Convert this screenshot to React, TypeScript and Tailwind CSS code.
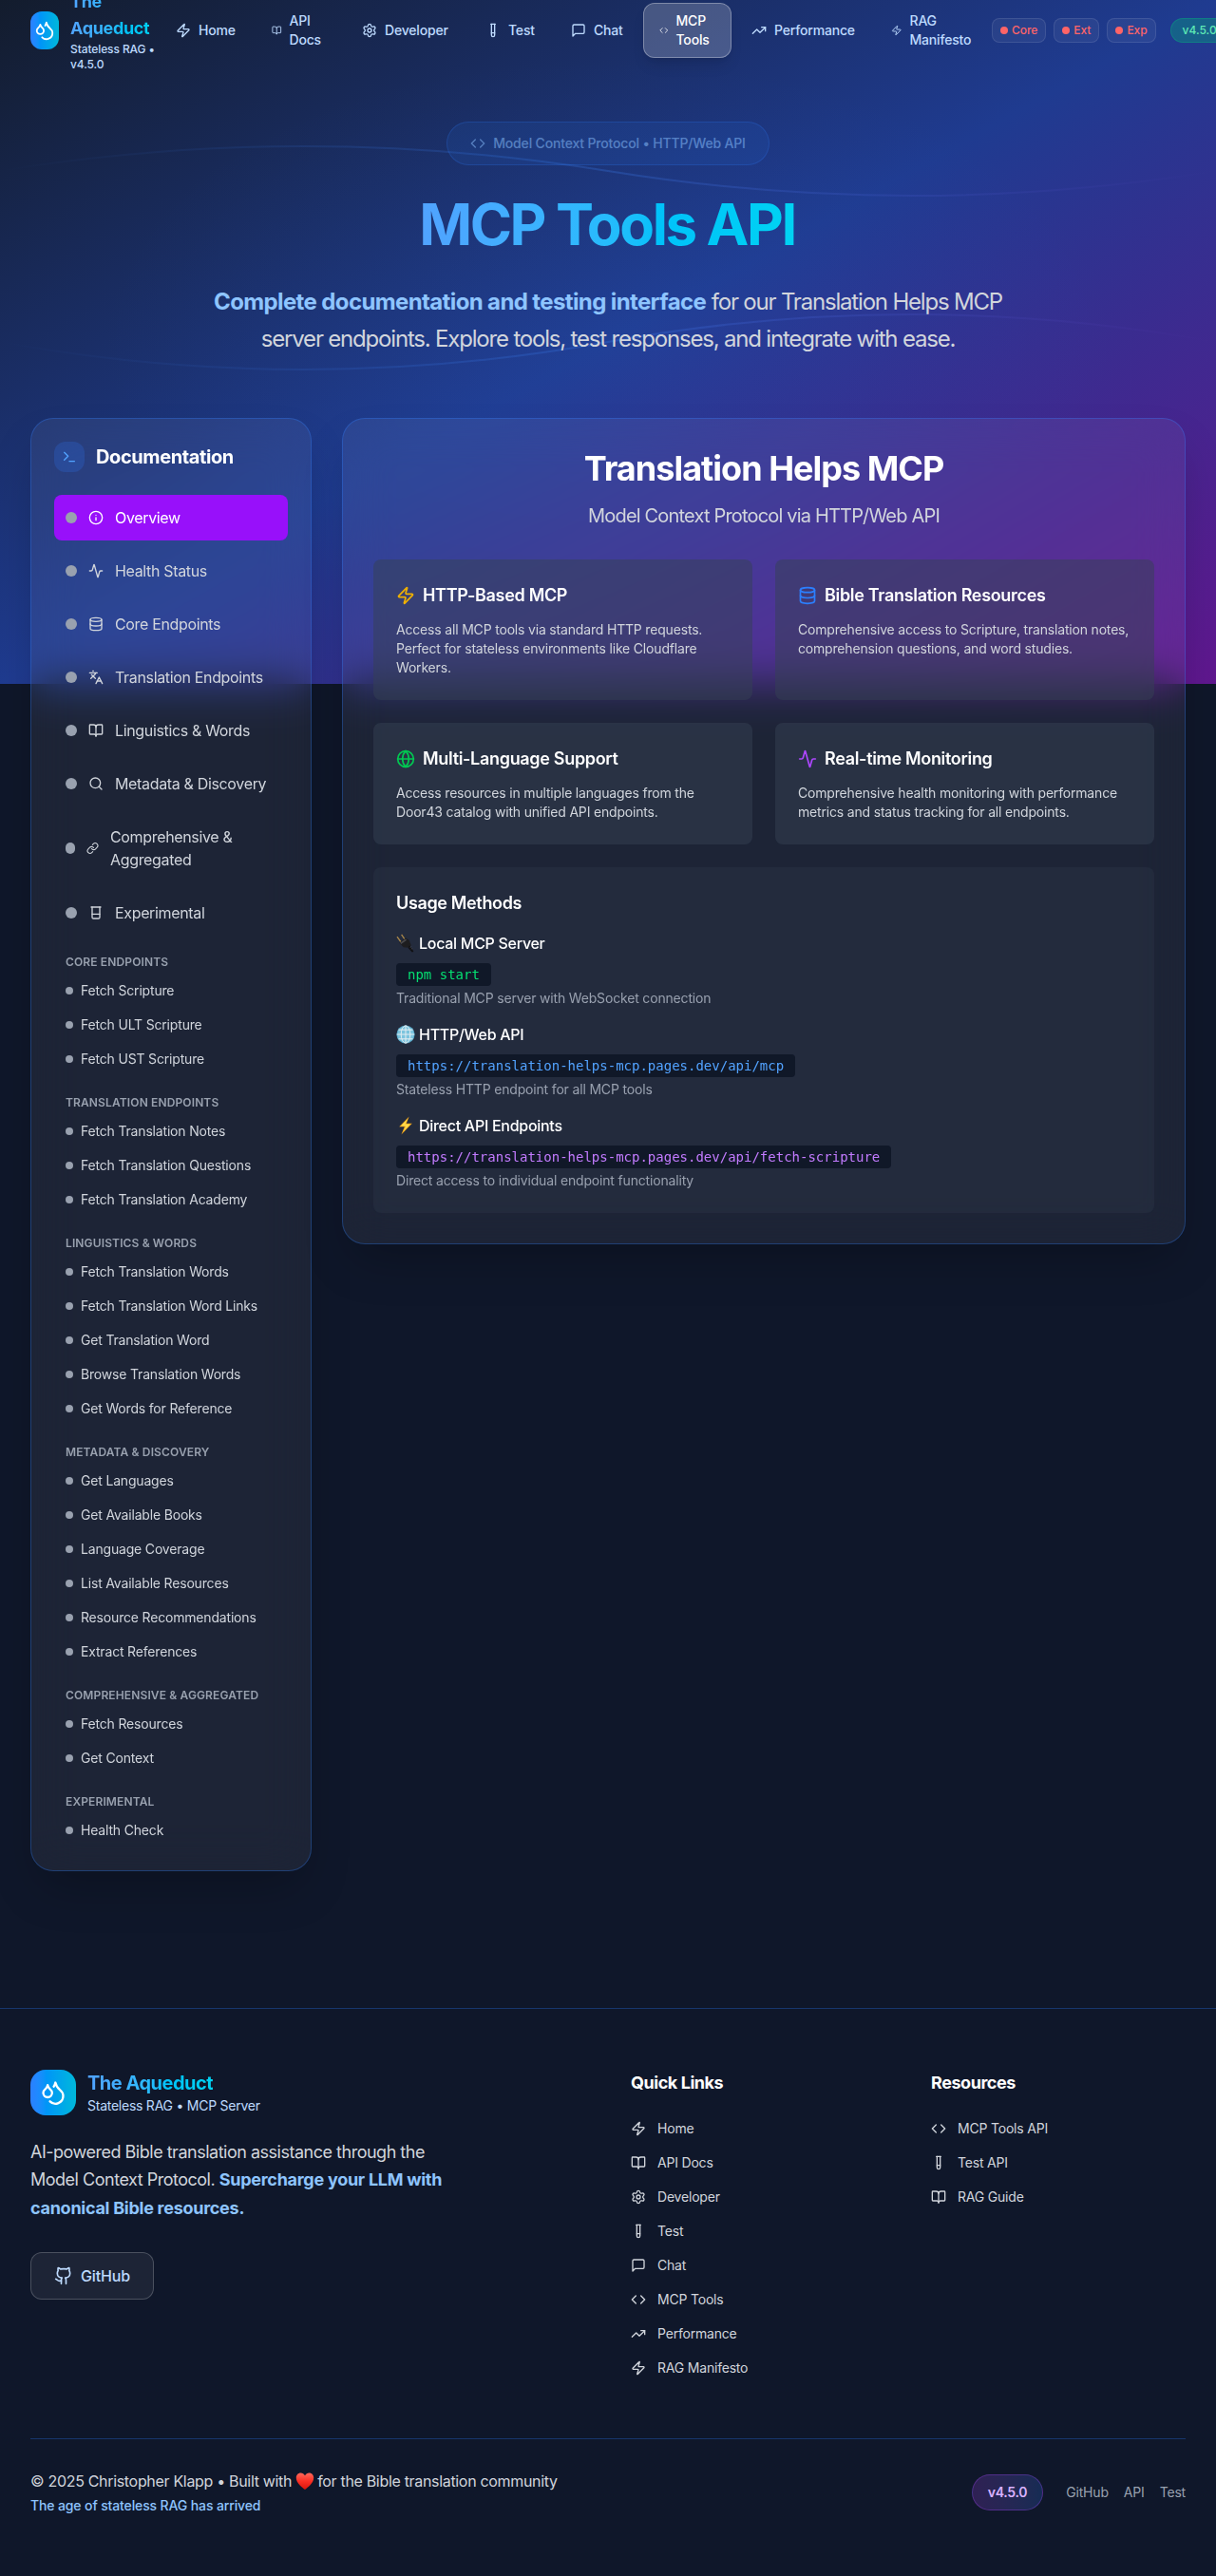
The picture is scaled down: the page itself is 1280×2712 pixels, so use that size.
import React from "react";
import {
  Activity,
  Beaker,
  BookOpen,
  Code,
  Database,
  Droplets,
  Github,
  Globe,
  Info,
  Languages,
  Link,
  Search,
  Settings,
  Terminal,
  TestTube,
  TrendingUp,
  Zap,
} from "lucide-react";

type IconType = React.ComponentType<{ className?: string }>;

function Message({ className }: { className?: string }) {
  return (
    <svg
      viewBox="0 0 24 24"
      fill="none"
      stroke="currentColor"
      strokeWidth="2"
      strokeLinecap="round"
      strokeLinejoin="round"
      className={className}
    >
      <path d="M21 15a2 2 0 0 1-2 2H7l-4 4V5a2 2 0 0 1 2-2h14a2 2 0 0 1 2 2z" />
    </svg>
  );
}

const navItems: { label: string; icon: IconType; box: string; iconSize: string; active?: boolean }[] = [
  { label: "Home", icon: Zap, box: "w-[97px]", iconSize: "size-4" },
  { label: "API Docs", icon: BookOpen, box: "w-[91px]", iconSize: "h-4 w-[10.5px]" },
  { label: "Developer", icon: Settings, box: "w-[126px]", iconSize: "size-4" },
  { label: "Test", icon: TestTube, box: "w-[86px]", iconSize: "size-4" },
  { label: "Chat", icon: Message, box: "w-[89px]", iconSize: "size-4" },
  { label: "MCP Tools", icon: Code, box: "w-[93px]", iconSize: "h-4 w-[9.5px]", active: true },
  { label: "Performance", icon: TrendingUp, box: "w-[143px]", iconSize: "size-4" },
  { label: "RAG Manifesto", icon: Zap, box: "w-[119px]", iconSize: "h-4 w-[11.5px]" },
];

const sections: { label: string; icon: IconType; active?: boolean; tall?: boolean }[] = [
  { label: "Overview", icon: Info, active: true },
  { label: "Health Status", icon: Activity },
  { label: "Core Endpoints", icon: Database },
  { label: "Translation Endpoints", icon: Languages },
  { label: "Linguistics & Words", icon: BookOpen },
  { label: "Metadata & Discovery", icon: Search },
  { label: "Comprehensive & Aggregated", icon: Link, tall: true },
  { label: "Experimental", icon: Beaker },
];

const groups = [
  { title: "Core Endpoints", items: ["Fetch Scripture", "Fetch ULT Scripture", "Fetch UST Scripture"] },
  {
    title: "Translation Endpoints",
    items: ["Fetch Translation Notes", "Fetch Translation Questions", "Fetch Translation Academy"],
  },
  {
    title: "Linguistics & Words",
    items: [
      "Fetch Translation Words",
      "Fetch Translation Word Links",
      "Get Translation Word",
      "Browse Translation Words",
      "Get Words for Reference",
    ],
  },
  {
    title: "Metadata & Discovery",
    items: [
      "Get Languages",
      "Get Available Books",
      "Language Coverage",
      "List Available Resources",
      "Resource Recommendations",
      "Extract References",
    ],
  },
  { title: "Comprehensive & Aggregated", items: ["Fetch Resources", "Get Context"] },
  { title: "Experimental", items: ["Health Check"] },
];

const features: { title: string; icon: IconType; color: string; text: string }[] = [
  {
    title: "HTTP-Based MCP",
    icon: Zap,
    color: "text-yellow-500",
    text: "Access all MCP tools via standard HTTP requests. Perfect for stateless environments like Cloudflare Workers.",
  },
  {
    title: "Bible Translation Resources",
    icon: Database,
    color: "text-blue-500",
    text: "Comprehensive access to Scripture, translation notes, comprehension questions, and word studies.",
  },
  {
    title: "Multi-Language Support",
    icon: Globe,
    color: "text-green-500",
    text: "Access resources in multiple languages from the Door43 catalog with unified API endpoints.",
  },
  {
    title: "Real-time Monitoring",
    icon: Activity,
    color: "text-purple-500",
    text: "Comprehensive health monitoring with performance metrics and status tracking for all endpoints.",
  },
];

function PlugEmoji() {
  return (
    <svg viewBox="0 0 20 20" className="size-5 shrink-0">
      <path d="M1 3.2 5.2 9M5.6.8 9.4 6.4" stroke="#a8874a" strokeWidth="1.3" />
      <path d="M3.2 9.6 10 4.6l3.6 2.2 2.2 5.4-2.6 2.6-5.4-.6z" fill="#1d1d1f" />
      <path d="M4.2 9.6 10 5.4l1 1.3-5.8 4.4z" fill="#4a4a4d" />
      <path d="m13.8 12.6 2 1.6 2.6 4.6-1.6.8-4-4.4z" fill="#111113" />
      <path d="m14.6 14.6 1.6-1M15.8 16.2l1.4-.8" stroke="#55555a" strokeWidth=".7" />
    </svg>
  );
}

function GlobeEmoji() {
  return (
    <svg viewBox="0 0 20 20" className="size-5 shrink-0">
      <circle cx="10" cy="10" r="9.6" fill="#58a9c9" />
      <circle cx="10" cy="10" r="8.6" fill="#7cc4de" />
      <g fill="none" stroke="#e4eef2" strokeWidth="1">
        <path d="M10 .8v18.4M.8 10h18.4M2.4 5.2h15.2M2.4 14.8h15.2" />
        <ellipse cx="10" cy="10" rx="4.8" ry="9.2" />
      </g>
    </svg>
  );
}

function BoltEmoji() {
  return (
    <svg viewBox="0 0 20 20" className="size-5 shrink-0">
      <path d="M13.6.6 3.2 11.2h5.6L5.4 19.6l11.4-11.8h-6z" fill="#f7a81b" />
      <path d="M12.4 2.6 5 10.4h5.2l-2.8 6.4 7.4-8.2H9.4z" fill="#ffdb4d" />
    </svg>
  );
}

function HeartEmoji() {
  return (
    <svg viewBox="0 0 20 20" className="mr-[3px] ml-1 inline-block size-5 align-[-4px]">
      <defs>
        <linearGradient id="heart" x1="0" y1="0" x2="0" y2="1">
          <stop offset="0" stopColor="#ff6a5c" />
          <stop offset=".5" stopColor="#fb2f24" />
          <stop offset="1" stopColor="#d9160c" />
        </linearGradient>
      </defs>
      <path
        d="M10 19C7.4 17.4.8 12.4.8 6.6.8 3.6 2.9 1.4 5.5 1.4c2 0 3.6 1.1 4.5 2.9.9-1.8 2.5-2.9 4.5-2.9 2.6 0 4.7 2.2 4.7 5.2C19.2 12.4 12.6 17.4 10 19z"
        fill="url(#heart)"
      />
    </svg>
  );
}

const methods = [
  {
    title: "Local MCP Server",
    emoji: PlugEmoji,
    code: "npm start",
    color: "text-green-400",
    note: "Traditional MCP server with WebSocket connection",
  },
  {
    title: "HTTP/Web API",
    emoji: GlobeEmoji,
    code: "https://translation-helps-mcp.pages.dev/api/mcp",
    color: "text-blue-400",
    note: "Stateless HTTP endpoint for all MCP tools",
  },
  {
    title: "Direct API Endpoints",
    emoji: BoltEmoji,
    code: "https://translation-helps-mcp.pages.dev/api/fetch-scripture",
    color: "text-purple-400",
    note: "Direct access to individual endpoint functionality",
  },
];

const quickLinks: { label: string; icon: IconType }[] = [
  { label: "Home", icon: Zap },
  { label: "API Docs", icon: BookOpen },
  { label: "Developer", icon: Settings },
  { label: "Test", icon: TestTube },
  { label: "Chat", icon: Message },
  { label: "MCP Tools", icon: Code },
  { label: "Performance", icon: TrendingUp },
  { label: "RAG Manifesto", icon: Zap },
];

const resources: { label: string; icon: IconType }[] = [
  { label: "MCP Tools API", icon: Code },
  { label: "Test API", icon: TestTube },
  { label: "RAG Guide", icon: BookOpen },
];

function Backdrop() {
  return (
    <div className="absolute inset-x-0 top-0 h-[720px] bg-linear-to-br/srgb from-[#131c2d] via-[#1f3b90] to-[#60178f]">
      <div className="absolute inset-0 bg-[radial-gradient(ellipse_at_center,rgb(59_130_246/0.07),transparent_60%)]" />
      <svg viewBox="0 0 1280 720" className="h-full w-full" fill="none">
        <defs>
          <linearGradient id="flow" x1="0" x2="1" y1="0" y2="0">
            <stop offset="0" stopColor="#3b82f6" stopOpacity="0" />
            <stop offset=".5" stopColor="#3b82f6" stopOpacity=".25" />
            <stop offset="1" stopColor="#8b5cf6" stopOpacity="0" />
          </linearGradient>
        </defs>
        <path d="M0 180Q320 128 640 180T1280 180" stroke="url(#flow)" strokeWidth="2" />
        <path d="M0 360Q320 418 640 360T1280 360" stroke="url(#flow)" strokeWidth="2" />
      </svg>
    </div>
  );
}

function Header() {
  return (
    <header className="flex h-16 items-center pl-8">
      <div className="flex w-[136px] shrink-0 items-center gap-3">
        <div className="flex h-10 w-[30px] shrink-0 items-center justify-center rounded-xl bg-linear-to-r from-blue-500 to-cyan-500">
          <Droplets className="h-6 w-[22px] text-white" />
        </div>
        <div className="w-[94px] shrink-0">
          <div className="w-[88px] bg-linear-to-r from-blue-400 to-cyan-400 bg-clip-text text-lg leading-7 font-bold tracking-[-0.35px] text-transparent">
            The
            <br />
            Aqueduct
          </div>
          <div className="text-xs font-medium tracking-[-0.1px] text-blue-200">
            Stateless RAG •<br />
            v4.5.0
          </div>
        </div>
      </div>
      <nav className="flex shrink-0 items-center gap-1">
        {navItems.map(({ label, icon: Icon, box, iconSize, active }) => (
          <a
            key={label}
            className={`flex shrink-0 items-center gap-2 rounded-xl border px-4 py-2 text-sm font-medium tracking-[-0.18px] ${box} ${
              active ? "border-white/30 bg-white/20 text-white shadow-lg" : "border-transparent text-blue-200"
            }`}
          >
            <Icon className={`shrink-0 ${iconSize}`} />
            <span>{label}</span>
          </a>
        ))}
      </nav>
      <div className="ml-1 flex shrink-0 items-center gap-2">
        {["Core", "Ext", "Exp"].map((name) => (
          <span
            key={name}
            className="flex items-center gap-1 rounded-lg border border-white/10 bg-white/5 px-2 py-1 text-xs font-medium tracking-[-0.05px] text-red-400"
          >
            <span className="size-2 rounded-full bg-red-400" />
            {name}
          </span>
        ))}
        <span className="ml-[7px] rounded-full border border-emerald-500/30 bg-emerald-500/30 px-3 py-1 text-xs font-medium text-emerald-300">
          v4.5.0
        </span>
      </div>
    </header>
  );
}

function Sidebar() {
  return (
    <aside className="w-[296px] shrink-0 rounded-3xl border border-blue-500/30 bg-white/[0.06] p-6 shadow-2xl backdrop-blur-xl">
      <div className="mb-6 flex items-center gap-3">
        <div className="flex size-8 items-center justify-center rounded-xl bg-blue-500/20">
          <Terminal className="size-4 text-blue-400" />
        </div>
        <h3 className="text-xl leading-8 font-bold tracking-[-0.4px] text-white">Documentation</h3>
      </div>
      <nav className="flex flex-col gap-2">
        {sections.map(({ label, icon: Icon, active, tall }) => (
          <a
            key={label}
            className={`flex items-center gap-3 rounded-lg p-3 text-base leading-6 tracking-[-0.34px] ${
              active ? "bg-purple-600 text-white" : "text-gray-300"
            }`}
          >
            <span className={`h-3 shrink-0 rounded-full bg-gray-400 ${tall ? "w-[10px]" : "w-3"}`} />
            <Icon className={`h-4 shrink-0 ${tall ? "w-[13px]" : "w-4"}`} />
            <span className={tall ? "w-[140px]" : "whitespace-nowrap"}>{label}</span>
          </a>
        ))}
      </nav>
      {groups.map((group) => (
        <div key={group.title} className="mt-5 px-3">
          <h4 className="mb-1 text-xs font-semibold tracking-[0.13px] whitespace-nowrap text-gray-400 uppercase">
            {group.title}
          </h4>
          {group.items.map((item) => (
            <a
              key={item}
              className="flex items-center gap-2 py-2 text-sm tracking-[-0.18px] whitespace-nowrap text-gray-300"
            >
              <span className="size-2 rounded-full bg-gray-400" />
              {item}
            </a>
          ))}
        </div>
      ))}
    </aside>
  );
}

function Overview() {
  return (
    <section className="w-[888px] shrink-0 rounded-3xl border border-blue-500/30 bg-white/[0.06] p-8 shadow-2xl backdrop-blur-xl">
      <div className="text-center">
        <h2 className="mb-4 text-4xl font-bold tracking-[-0.98px] text-white">Translation Helps MCP</h2>
        <p className="text-xl tracking-[-0.82px] text-gray-300">Model Context Protocol via HTTP/Web API</p>
      </div>
      <div className="mt-8 grid grid-cols-2 gap-6">
        {features.map(({ title, icon: Icon, color, text }) => (
          <div key={title} className="rounded-lg bg-gray-700/50 p-6">
            <h3 className="mb-3 flex items-center gap-2 text-lg leading-7 font-semibold tracking-[-0.32px] text-white">
              <Icon className={`size-5 ${color}`} />
              {title}
            </h3>
            <p className="text-sm tracking-[-0.18px] text-gray-300">{text}</p>
          </div>
        ))}
      </div>
      <div className="mt-6 rounded-lg bg-gray-700/25 p-6">
        <h3 className="mb-4 text-lg leading-7 font-semibold tracking-[-0.35px] text-white">Usage Methods</h3>
        <div className="flex flex-col gap-4">
          {methods.map(({ title, emoji: Emoji, code, color, note }) => (
            <div key={title}>
              <h4 className="flex items-center gap-1 text-base leading-6 font-medium tracking-[-0.28px] text-white">
                <Emoji />
                {title}
              </h4>
              <code
                className={`mt-[9px] mb-[3px] block h-6 w-fit rounded bg-gray-900 px-3 font-['DejaVu_Sans_Mono',monospace] text-sm leading-6 ${color}`}
              >
                {code}
              </code>
              <p className="text-sm tracking-[-0.17px] text-gray-400">{note}</p>
            </div>
          ))}
        </div>
      </div>
    </section>
  );
}

function LinkColumn({ title, links }: { title: string; links: { label: string; icon: IconType }[] }) {
  return (
    <div>
      <h4 className="mb-6 text-lg leading-7 font-bold tracking-[-0.45px] text-white">{title}</h4>
      <ul className="flex flex-col gap-4">
        {links.map(({ label, icon: Icon }) => (
          <li key={label} className="flex items-center gap-3 text-sm tracking-[-0.2px] text-gray-300">
            <Icon className="size-4" />
            {label}
          </li>
        ))}
      </ul>
    </div>
  );
}

function Footer() {
  return (
    <footer className="mt-36 border-t border-blue-500/30 px-8 py-16">
      <div className="grid grid-cols-4 gap-12">
        <div className="col-span-2">
          <div className="flex items-center gap-3">
            <div className="flex size-12 items-center justify-center rounded-2xl bg-linear-to-r from-blue-500 to-cyan-500">
              <Droplets className="size-7 text-white" />
            </div>
            <div>
              <div className="w-fit bg-linear-to-r from-blue-400 to-cyan-400 bg-clip-text text-xl leading-7 font-bold tracking-[-0.5px] text-transparent">
                The Aqueduct
              </div>
              <div className="text-sm tracking-[-0.25px] text-blue-200">Stateless RAG • MCP Server</div>
            </div>
          </div>
          <p className="mt-6 max-w-md text-lg leading-relaxed tracking-[-0.49px] text-gray-300">
            AI-powered Bible translation assistance through the
            <br />
            Model Context Protocol.{" "}
            <span className="font-bold tracking-[-0.27px] text-blue-300">
              Supercharge your LLM with
              <br />
              canonical Bible resources.
            </span>
          </p>
          <a className="mt-8 flex w-fit items-center gap-2 rounded-xl border border-white/20 bg-white/[0.06] px-6 py-3 text-base leading-6 font-medium tracking-[-0.15px] text-blue-200">
            <Github className="size-5" />
            GitHub
          </a>
        </div>
        <LinkColumn title="Quick Links" links={quickLinks} />
        <LinkColumn title="Resources" links={resources} />
      </div>
      <div className="mt-16 flex items-center justify-between border-t border-blue-500/30 pt-8">
        <div>
          <p className="text-base leading-6 tracking-[-0.32px] text-gray-300">
            © 2025 Christopher Klapp • Built with
            <HeartEmoji />
            for the Bible translation community
          </p>
          <p className="mt-1 text-sm font-medium tracking-[-0.13px] text-blue-300">
            The age of stateless RAG has arrived
          </p>
        </div>
        <div className="flex items-center gap-6">
          <span className="rounded-full border border-purple-500/30 bg-linear-to-r from-purple-500/20 to-blue-500/20 px-4 py-2 text-sm font-semibold tracking-[-0.3px] text-purple-300">
            v4.5.0
          </span>
          <div className="flex gap-4 text-sm tracking-[-0.18px] text-gray-400">
            <a>GitHub</a>
            <a>API</a>
            <a>Test</a>
          </div>
        </div>
      </div>
    </footer>
  );
}

export default function App() {
  return (
    <div className="relative h-[2712px] w-full overflow-hidden bg-[#0f172a] font-[Inter,sans-serif]">
      <Backdrop />
      <div className="relative">
        <Header />
        <div className="flex flex-col items-center pt-16 text-center">
          <div className="mb-8 flex items-center gap-2 rounded-full border border-blue-500/20 bg-blue-500/10 px-6 py-3 text-sm font-medium tracking-[-0.17px] text-blue-300/50">
            <Code className="size-4" />
            Model Context Protocol • HTTP/Web API
          </div>
          <h1 className="bg-linear-to-r from-blue-400 to-cyan-400 bg-clip-text pr-[2px] text-6xl leading-[60px] font-bold tracking-[-2.4px] text-transparent">
            MCP Tools API
          </h1>
          <p className="mt-8 text-2xl leading-relaxed tracking-[-1.19px] whitespace-nowrap text-gray-300">
            <span className="font-bold tracking-[-0.62px] text-blue-300">
              Complete documentation and testing interface
            </span>{" "}
            for our Translation Helps MCP
            <br />
            server endpoints. Explore tools, test responses, and integrate with ease.
          </p>
        </div>
        <main className="mt-16 flex items-start gap-8 px-8">
          <Sidebar />
          <Overview />
        </main>
        <Footer />
      </div>
    </div>
  );
}
